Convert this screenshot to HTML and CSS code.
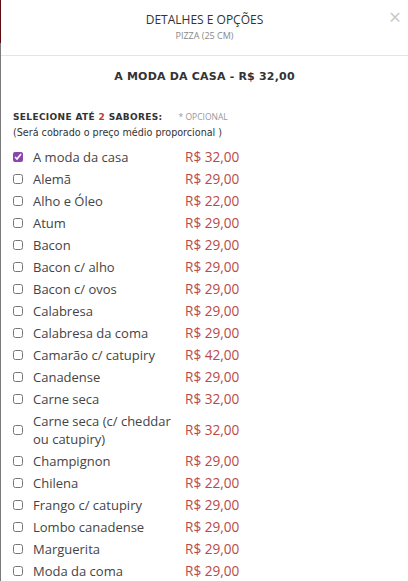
FILE: index.html
```html
<!DOCTYPE html>
<html lang="pt-BR">
<head>
  <meta charset="UTF-8" />
  <title>Detalhes e Opções</title>
  <link rel="stylesheet" href="styles.css">
</head>
<body>

  <div class="backdrop"></div>

  <div class="modal">
    <!-- Header -->
    <div class="modal-header">
      <h3>DETALHES E OPÇÕES</h3>
      <p class="subtitle">PIZZA (25 CM)</p>
      <span class="close">&times;</span>
    </div>

    <div class="modal-body">
      <h4 class="product-title">A MODA DA CASA - R$ 32,00</h4>

      <div class="group-label">
        <strong>SELECIONE ATÉ <span class="qty">2</span> SABORES:</strong>
        <span class="optional">* OPCIONAL</span>
      </div>
      <p class="group-note">(Será cobrado o preço médio proporcional )</p>

      <ul class="flavors">
        <li><input type="checkbox" checked><span class="name">A moda da casa</span><span class="price">R$ 32,00</span></li>
        <li><input type="checkbox"><span class="name">Alemã</span><span class="price">R$ 29,00</span></li>
        <li><input type="checkbox"><span class="name">Alho e Óleo</span><span class="price">R$ 22,00</span></li>
        <li><input type="checkbox"><span class="name">Atum</span><span class="price">R$ 29,00</span></li>
        <li><input type="checkbox"><span class="name">Bacon</span><span class="price">R$ 29,00</span></li>
        <li><input type="checkbox"><span class="name">Bacon c/ alho</span><span class="price">R$ 29,00</span></li>
        <li><input type="checkbox"><span class="name">Bacon c/ ovos</span><span class="price">R$ 29,00</span></li>
        <li><input type="checkbox"><span class="name">Calabresa</span><span class="price">R$ 29,00</span></li>
        <li><input type="checkbox"><span class="name">Calabresa da coma</span><span class="price">R$ 29,00</span></li>
        <li><input type="checkbox"><span class="name">Camarão c/ catupiry</span><span class="price">R$ 42,00</span></li>
        <li><input type="checkbox"><span class="name">Canadense</span><span class="price">R$ 29,00</span></li>
        <li><input type="checkbox"><span class="name">Carne seca</span><span class="price">R$ 32,00</span></li>
        <li><input type="checkbox"><span class="name">Carne seca (c/ cheddar ou catupiry)</span><span class="price">R$ 32,00</span></li>
        <li><input type="checkbox"><span class="name">Champignon</span><span class="price">R$ 29,00</span></li>
        <li><input type="checkbox"><span class="name">Chilena</span><span class="price">R$ 22,00</span></li>
        <li><input type="checkbox"><span class="name">Frango c/ catupiry</span><span class="price">R$ 29,00</span></li>
        <li><input type="checkbox"><span class="name">Lombo canadense</span><span class="price">R$ 29,00</span></li>
        <li><input type="checkbox"><span class="name">Marguerita</span><span class="price">R$ 29,00</span></li>
        <li><input type="checkbox"><span class="name">Moda da coma</span><span class="price">R$ 29,00</span></li>
      </ul>
    </div>
  </div>

</body>
</html>
```

FILE: styles.css
```css
html, body {
  margin: 0;
  height: 100%;
  overflow: hidden;
}

body {
  font-family: 'Open Sans', sans-serif;
  color: #333;
  background: #777;
  display: flex;
}

/* strip of the page behind the modal */
.backdrop {
  width: 1px;
  flex-shrink: 0;
  background: linear-gradient(to bottom, #5c0b12 0, #5c0b12 43px, #7a7a7a 43px);
}

.modal {
  flex: 1;
  background: #fff;
  overflow: hidden;
}

.modal-header {
  position: relative;
  text-align: center;
  padding: 13px 0 14px;
  border-bottom: 1px solid #e5e5e5;
}

.modal-header h3 {
  margin: 0;
  font-size: 12px;
  font-weight: normal;
  line-height: 14px;
  color: #333;
}

.subtitle {
  margin: 3px 0 0;
  font-size: 9px;
  line-height: 11px;
  color: #888;
}

.close {
  position: absolute;
  top: 6px;
  right: 7px;
  font-size: 21px;
  line-height: 22px;
  color: #c8c8c8;
}

.modal-body {
  padding: 0 12px;
}

.product-title {
  margin: 13px 0 26px;
  text-align: center;
  font-family: 'DejaVu Sans', sans-serif;
  font-size: 11px;
  line-height: 16px;
  font-weight: bold;
  letter-spacing: 0.2px;
}

.group-label {
  display: flex;
  align-items: baseline;
  gap: 16px;
}

.group-label strong {
  font-family: 'DejaVu Sans', sans-serif;
  font-size: 9px;
  letter-spacing: 0.35px;
}

.qty {
  color: #c0392b;
}

.optional {
  font-size: 8.5px;
  color: #999;
}

.group-note {
  margin: 5px 0 7px;
  font-family: 'DejaVu Sans', sans-serif;
  font-size: 9.6px;
  line-height: 12px;
}

.flavors {
  list-style: none;
  margin: 0;
  padding: 0;
}

.flavors li {
  display: flex;
  align-items: center;
  padding: 2px 0;
  font-size: 13px;
  line-height: 18px;
}

.flavors input {
  width: 10px;
  height: 10px;
  margin: 0 10px 0 0;
  accent-color: #8e44ad;
}

.name {
  width: 152px;
  color: #444;
}

.price {
  font-size: 13.6px;
  color: #b94a48;
}
```
